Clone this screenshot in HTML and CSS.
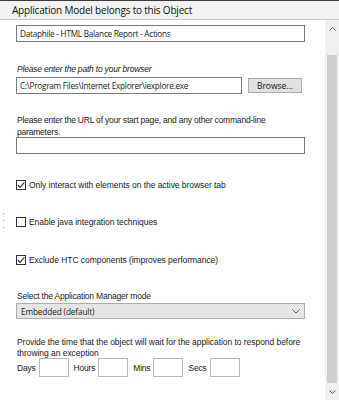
FILE: index.html
```html
<!DOCTYPE html>
<html lang="en">
<head>
  <meta charset="UTF-8">
  <title>Application Model</title>
  <link rel="stylesheet" href="styles.css">
</head>
<body>
  <div class="header">Application Model belongs to this Object</div>

  <div class="panel">
    <div class="content">
      <div class="textbox wide">Dataphile - HTML Balance Report - Actions</div>

      <div class="label italic">Please enter the path to your browser</div>
      <div class="path-row">
        <div class="textbox path">C:\Program Files\Internet Explorer\iexplore.exe</div>
        <button class="browse">Browse...</button>
      </div>

      <div class="label url-label">Please enter the URL of your start page, and any other command-line parameters.</div>
      <div class="textbox wide"></div>

      <div class="check check-first">
        <span class="box"><svg width="10" height="10" viewBox="0 0 10 10"><path d="M1.8 5 L4 7.3 L8.4 2.4" fill="none" stroke="#2b3a4a" stroke-width="1.2"/></svg></span>
        Only interact with elements on the active browser tab
      </div>
      <div class="check">
        <span class="box"></span>
        Enable java integration techniques
      </div>
      <div class="check check-last">
        <span class="box"><svg width="10" height="10" viewBox="0 0 10 10"><path d="M1.8 5 L4 7.3 L8.4 2.4" fill="none" stroke="#2b3a4a" stroke-width="1.2"/></svg></span>
        Exclude HTC components (improves performance)
      </div>

      <div class="label mode-label">Select the Application Manager mode</div>
      <div class="select">
        <span>Embedded (default)</span>
        <svg width="8" height="5" viewBox="0 0 8 5"><path d="M0.5 0.5 L4 4 L7.5 0.5" fill="none" stroke="#555" stroke-width="1"/></svg>
      </div>

      <div class="label time-label">Provide the time that the object will wait for the application to respond before throwing an exception</div>
      <div class="time-row">
        <span>Days</span><div class="timebox"></div>
        <span>Hours</span><div class="timebox"></div>
        <span>Mins</span><div class="timebox"></div>
        <span>Secs</span><div class="timebox"></div>
      </div>
    </div>

    <div class="scrollbar">
      <div class="arrow">
        <svg width="7" height="4" viewBox="0 0 7 4"><path d="M0.5 3.5 L3.5 0.5 L6.5 3.5" fill="none" stroke="#606060" stroke-width="1"/></svg>
      </div>
      <div class="track"><div class="thumb"></div></div>
      <div class="arrow">
        <svg width="7" height="4" viewBox="0 0 7 4"><path d="M0.5 0.5 L3.5 3.5 L6.5 0.5" fill="none" stroke="#606060" stroke-width="1"/></svg>
      </div>
    </div>
  </div>

  <div class="dots"><i></i><i></i><i></i></div>
</body>
</html>
```

FILE: styles.css
```css
* { margin: 0; padding: 0; box-sizing: border-box; }
body {
  width: 339px;
  height: 400px;
  overflow: hidden;
  background: #fff;
  font-family: "Liberation Sans", Arial, sans-serif;
  font-size: 8.5px;
  letter-spacing: -0.2px;
  color: #1a1a1a;
  display: flex;
  flex-direction: column;
}
.header {
  height: 20px;
  background: #f2f2f2;
  border-top: 1px solid #3a3a3a;
  border-bottom: 1px solid #c8c8c8;
  padding: 2px 0 0 12px;
  font-family: "Open Sans", sans-serif;
  font-size: 10px;
  color: #111;
}
.panel {
  flex: 1;
  display: flex;
}
.content {
  flex: 1;
  padding: 5px 0 0 16px;
}
.textbox {
  height: 17px;
  border: 1px solid #7a7a7a;
  background: #fff;
  padding: 2px 3px 0;
  font-family: "Open Sans", sans-serif;
  font-size: 8.2px;
  letter-spacing: -0.25px;
}
.wide { width: 289px; }
.label {
  padding-left: 1px;
  line-height: 12px;
}
.italic {
  font-style: italic;
  margin-top: 21px;
  margin-bottom: 2px;
  height: 12px;
}
.path-row {
  display: flex;
  align-items: flex-start;
  gap: 6px;
}
.path { width: 226px; }
.browse {
  width: 54px;
  height: 15px;
  margin-top: 1px;
  background: #e1e1e1;
  border: 1px solid #adadad;
  font-family: "Open Sans", sans-serif;
  font-size: 8.5px;
  color: #111;
}
.url-label {
  margin-top: 20px;
  height: 23px;
  width: 262px;
}
.check {
  display: flex;
  align-items: center;
  gap: 3px;
  height: 10px;
  line-height: 10px;
  margin-top: 27px;
  letter-spacing: -0.05px;
}
.check-first { margin-top: 26px; }
.check-last { margin-top: 28px; }
.box {
  width: 10px;
  height: 10px;
  border: 1px solid #333;
  background: #fff;
  display: flex;
}
.box svg { margin: -1px; }
.mode-label {
  margin-top: 25px;
  height: 12px;
}
.select {
  width: 289px;
  height: 16px;
  margin-top: 1px;
  background: #e5e5e5;
  border: 1px solid #adadad;
  display: flex;
  align-items: center;
  justify-content: space-between;
  padding: 0 4px 0 4px;
  font-family: "Open Sans", sans-serif;
  font-size: 8.2px;
  letter-spacing: -0.1px;
}
.time-label {
  margin-top: 18px;
  height: 21px;
  line-height: 10.5px;
  width: 295px;
  letter-spacing: -0.05px;
}
.time-row {
  display: flex;
  align-items: center;
  gap: 3px;
  height: 19px;
  padding-left: 1px;
}
.timebox {
  width: 30px;
  height: 19px;
  border: 1px solid #b9b9b9;
  background: #fff;
  margin-right: 2px;
}
.scrollbar {
  width: 14px;
  background: #f0f0f0;
  display: flex;
  flex-direction: column;
}
.arrow {
  height: 17px;
  display: flex;
  align-items: center;
  justify-content: center;
}
.track {
  flex: 1;
  padding: 18px 2px 0;
}
.thumb {
  height: 100%;
  background: #cdcdcd;
}
.dots {
  position: absolute;
  left: 3px;
  top: 213px;
  display: flex;
  flex-direction: column;
  gap: 6px;
}
.dots i {
  display: block;
  width: 1px;
  height: 1px;
  background: #888;
}
```
